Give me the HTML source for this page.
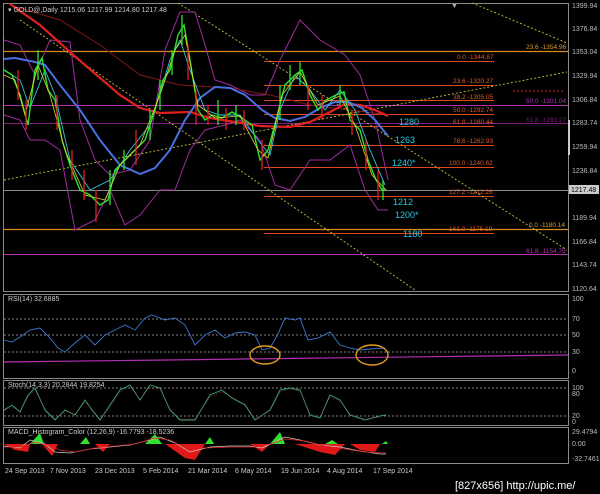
<!DOCTYPE html>
<html><head><meta charset="utf-8"><style>
html,body{margin:0;padding:0;background:#000;width:600px;height:494px;overflow:hidden}
svg{display:block}
text{font-family:"Liberation Sans",sans-serif}
</style></head><body>
<svg width="600" height="494" viewBox="0 0 600 494" xmlns="http://www.w3.org/2000/svg">
<rect width="600" height="494" fill="#000"/>
<!-- panel borders -->
<g fill="none" stroke="#8a8a8a" stroke-width="1">
<rect x="3.5" y="3.5" width="565" height="288"/>
<rect x="3.5" y="294.5" width="565" height="84"/>
<rect x="3.5" y="380.5" width="565" height="45"/>
<rect x="3.5" y="427.5" width="565" height="36"/>
</g>
<!-- right axis labels -->
<g font-size="7" fill="#bbb">
<text x="572" y="8">1399.94</text><text x="572" y="31">1376.84</text><text x="572" y="54">1353.04</text>
<text x="572" y="78">1329.94</text><text x="572" y="102">1306.84</text><text x="572" y="125">1283.74</text>
<text x="572" y="149">1259.94</text><text x="572" y="173">1236.84</text><text x="572" y="220">1189.94</text>
<text x="572" y="244">1166.84</text><text x="572" y="267">1143.74</text><text x="572" y="291">1120.64</text>
<text x="572" y="301">100</text><text x="572" y="321">70</text><text x="572" y="337">50</text>
<text x="572" y="354">30</text><text x="572" y="373">0</text>
<text x="572" y="390">100</text><text x="572" y="396">80</text><text x="572" y="418">20</text><text x="572" y="424">0</text>
<text x="572" y="434">29.4794</text><text x="572" y="446">0.00</text><text x="572" y="461">-32.7461</text>
</g>
<rect x="569" y="185" width="30" height="9" fill="#ccc"/>
<text x="571" y="192" font-size="7" fill="#000">1217.48</text>
<rect x="568" y="120" width="2" height="35" fill="#ccc"/>
<!-- full width horizontal lines -->
<line x1="4" y1="51.5" x2="568" y2="51.5" stroke="#d88a20" stroke-width="1.2"/>
<line x1="4" y1="105.5" x2="568" y2="105.5" stroke="#b030b0"/>
<line x1="4" y1="123.5" x2="568" y2="123.5" stroke="#802080"/>
<line x1="4" y1="190.5" x2="568" y2="190.5" stroke="#8a8a8a"/>
<line x1="4" y1="229.5" x2="568" y2="229.5" stroke="#d88a20" stroke-width="1.2"/>
<line x1="4" y1="254.5" x2="568" y2="254.5" stroke="#b030b0"/>
<!-- fib lines -->
<g stroke="#e04a1a" stroke-width="1">
<line x1="264" y1="61.5" x2="494" y2="61.5"/><line x1="264" y1="85.5" x2="494" y2="85.5"/>
<line x1="264" y1="100.5" x2="494" y2="100.5"/><line x1="264" y1="114.5" x2="494" y2="114.5"/>
<line x1="264" y1="126.5" x2="494" y2="126.5"/><line x1="264" y1="145.5" x2="494" y2="145.5"/>
<line x1="264" y1="167.5" x2="494" y2="167.5"/><line x1="264" y1="196.5" x2="494" y2="196.5"/>
<line x1="264" y1="233.5" x2="494" y2="233.5"/>
</g>
<g font-size="6.5" fill="#e05a2a">
<text x="457" y="59">0.0 -1344.87</text><text x="453" y="83">23.6 -1320.27</text>
<text x="453" y="99">38.2 -1305.05</text><text x="453" y="112">50.0 -1292.74</text>
<text x="453" y="124">61.8 -1280.44</text><text x="453" y="143">78.6 -1262.93</text>
<text x="449" y="165">100.0 -1240.62</text><text x="449" y="194">127.2 -1212.26</text>
<text x="449" y="231">161.0 -1175.19</text>
</g>
<text x="526" y="49" font-size="6.5" fill="#d8a030">23.6 -1354.96</text>
<text x="529" y="227" font-size="6.5" fill="#d8a030">0.0 -1180.14</text>
<text x="526" y="103" font-size="6.5" fill="#b030b0">50.0 -1301.04</text>
<text x="526" y="122" font-size="6.5" fill="#702070">61.8 -1283.27</text>
<text x="526" y="253" font-size="6.5" fill="#b030b0">61.8 -1154.75</text>
<line x1="513" y1="91" x2="563" y2="91" stroke="#e02020" stroke-dasharray="2,2"/>
<!-- dashed trendlines -->
<g stroke="#c8c040" stroke-width="0.9" stroke-dasharray="2,2" fill="none">
<line x1="178" y1="3" x2="567" y2="250"/>
<line x1="472" y1="3" x2="567" y2="43"/>
<line x1="4" y1="180" x2="567" y2="72"/>
<line x1="20" y1="20" x2="415" y2="290"/>
</g>
<!-- bollinger magenta -->
<g fill="none" stroke="#a02ca0" stroke-width="1">
<polyline points="4,40 20,45 35,75 50,40 70,42 80,120 95,160 110,175 130,170 150,140 165,50 180,12 195,12 205,45 215,80 230,85 250,95 265,95 280,60 300,20 320,40 345,55 360,75 375,120 388,180"/>
<polyline points="4,115 20,120 30,140 45,140 60,150 75,230 95,220 110,190 125,225 140,215 160,190 175,190 190,150 205,130 225,125 240,120 260,140 275,185 290,190 310,160 330,160 350,145 365,190 378,210 388,210"/>
</g>
<!-- dark red slow MA -->
<polyline fill="none" stroke="#801818" stroke-width="1" points="10,5 60,20 100,45 140,75 180,85 230,88 270,95 310,105 350,110 390,115"/>
<!-- red MA -->
<polyline fill="none" stroke="#e02020" stroke-width="2.2" points="10,4 40,25 70,52 100,78 120,95 140,108 160,113 190,112 210,118 235,122 260,126 290,127 310,122 330,112 345,104 360,105 375,110 388,116"/>
<!-- blue MA -->
<polyline fill="none" stroke="#4a6fe0" stroke-width="2" points="4,59 15,58 35,62 45,65 60,85 80,110 100,140 120,165 140,174 155,168 170,150 185,120 200,98 215,87 230,88 245,95 262,110 275,118 290,121 305,117 320,108 335,102 348,102 362,108 375,120 388,136"/>
<!-- cyan fast MA -->
<polyline fill="none" stroke="#30c8d8" stroke-width="0.9" points="4,70 20,80 30,108 45,70 55,95 70,160 90,190 110,180 130,150 150,125 170,60 180,40 190,70 205,110 220,115 240,115 258,140 270,155 280,110 295,75 310,90 325,110 340,90 355,110 370,150 385,185"/>
<!-- price line (candles approx) -->
<polyline fill="none" stroke="#30e030" stroke-width="1.4" points="4,70 12,75 20,95 28,125 35,70 42,58 48,90 55,100 62,140 70,165 80,190 90,195 100,205 108,200 115,170 125,160 135,150 145,140 155,110 163,80 170,70 178,35 184,25 190,60 198,110 205,120 212,115 222,118 232,112 242,118 252,125 260,160 268,150 276,120 285,85 295,75 302,70 310,95 318,110 326,100 336,95 344,92 350,120 360,130 368,160 376,180 382,190 386,190"/>
<polyline fill="none" stroke="#d8d830" stroke-width="0.8" points="4,75 15,80 25,115 38,65 50,95 65,150 85,195 105,200 120,165 140,145 160,95 175,50 185,35 198,105 215,118 240,116 258,150 268,158 282,95 300,72 318,105 340,96 355,125 372,175 386,190"/>
<g stroke="#e02020" stroke-width="1.3">
<line x1="18" y1="70" x2="18" y2="100"/><line x1="26" y1="100" x2="26" y2="130"/><line x1="57" y1="95" x2="57" y2="130"/>
<line x1="72" y1="150" x2="72" y2="180"/><line x1="84" y1="170" x2="84" y2="200"/><line x1="96" y1="190" x2="96" y2="222"/>
<line x1="136" y1="130" x2="136" y2="165"/><line x1="188" y1="45" x2="188" y2="80"/><line x1="196" y1="90" x2="196" y2="125"/>
<line x1="208" y1="105" x2="208" y2="125"/><line x1="226" y1="108" x2="226" y2="130"/><line x1="244" y1="110" x2="244" y2="130"/>
<line x1="262" y1="140" x2="262" y2="170"/><line x1="308" y1="85" x2="308" y2="110"/><line x1="322" y1="95" x2="322" y2="120"/>
<line x1="352" y1="110" x2="352" y2="135"/><line x1="366" y1="140" x2="366" y2="170"/><line x1="378" y1="170" x2="378" y2="200"/>
</g>
<g stroke="#30e030" stroke-width="1.3">
<line x1="38" y1="50" x2="38" y2="80"/><line x1="110" y1="170" x2="110" y2="205"/><line x1="124" y1="150" x2="124" y2="170"/>
<line x1="150" y1="110" x2="150" y2="140"/><line x1="160" y1="80" x2="160" y2="110"/><line x1="172" y1="50" x2="172" y2="75"/>
<line x1="182" y1="15" x2="182" y2="45"/><line x1="218" y1="100" x2="218" y2="125"/><line x1="236" y1="105" x2="236" y2="125"/>
<line x1="280" y1="85" x2="280" y2="120"/><line x1="290" y1="65" x2="290" y2="90"/><line x1="300" y1="62" x2="300" y2="85"/>
<line x1="340" y1="85" x2="340" y2="105"/><line x1="383" y1="180" x2="383" y2="200"/>
</g>
<!-- cyan labels -->
<g font-size="9" fill="#28c8e0">
<text x="399" y="125">1280</text><text x="395" y="143">1263</text><text x="392" y="166">1240*</text>
<text x="393" y="205">1212</text><text x="395" y="218">1200*</text><text x="403" y="237">1180</text>
</g>
<text x="8" y="12" font-size="7" fill="#ccc">▾ GOLD@,Daily  1215.06 1217.99 1214.80 1217.48</text>
<text x="451" y="8" font-size="7" fill="#aaa">▼</text>
<!-- RSI -->
<g stroke="#aaa" stroke-width="0.7" stroke-dasharray="2,2">
<line x1="4" y1="319" x2="568" y2="319"/><line x1="4" y1="335" x2="568" y2="335"/><line x1="4" y1="352" x2="568" y2="352"/>
<line x1="4" y1="388" x2="568" y2="388"/><line x1="4" y1="416" x2="568" y2="416"/>
</g>
<text x="8" y="301" font-size="7" fill="#ccc">RSI(14) 32.6885</text>
<line x1="4" y1="362" x2="568" y2="355" stroke="#b030b0" stroke-width="1.2"/>
<polyline fill="none" stroke="#3a78d0" stroke-width="0.9" points="4,340 12,342 20,337 30,330 40,328 50,338 58,348 65,352 75,343 85,335 95,345 105,335 115,330 125,325 135,330 145,318 152,315 165,320 175,318 185,325 195,345 205,335 215,330 225,338 235,333 245,332 255,335 262,350 270,348 277,336 285,318 295,320 300,318 308,340 318,338 330,332 340,345 350,348 360,350 370,349 385,348"/>
<ellipse cx="265" cy="355" rx="15" ry="9" fill="none" stroke="#e09a20" stroke-width="1.4"/>
<ellipse cx="372" cy="355" rx="16" ry="10" fill="none" stroke="#e09a20" stroke-width="1.4"/>
<!-- Stoch -->
<text x="8" y="387" font-size="7" fill="#ccc">Stoch(14,3,3) 20.2844 19.8254</text>
<polyline fill="none" stroke="#3aa878" stroke-width="0.9" points="4,410 12,405 20,412 28,395 35,388 45,410 55,420 65,410 75,415 85,400 92,410 100,420 110,405 120,390 130,385 140,400 150,385 160,388 170,410 180,420 195,420 210,395 222,390 232,398 245,405 255,420 270,410 280,390 290,388 300,390 310,415 320,418 330,395 340,400 350,415 365,420 380,416 386,415"/>
<polyline fill="none" stroke="#c04040" stroke-width="0.5" stroke-dasharray="1,1" points="4,411 12,407 20,411 28,397 35,390 45,409 55,419 65,411 75,414 85,402 92,409 100,419 110,407 120,392 130,387 140,399 150,387 160,389 170,409 180,419 195,419 210,397 222,392 232,397 245,404 255,419 270,411 280,392 290,389 300,391 310,414 320,417 330,397 340,401 350,414 365,419 380,417"/>
<!-- MACD -->
<text x="8" y="434" font-size="7" fill="#ccc">MACD_Histogram_Color (12,26,9) -16.7793 -18.5236</text>
<g fill="#e01818">
<polygon points="4,444 30,444 28,452 15,450"/><polygon points="42,444 58,444 52,456"/><polygon points="95,444 110,444 103,452"/>
<polygon points="165,444 205,444 195,460 185,458"/><polygon points="250,444 270,444 262,452"/><polygon points="295,444 345,444 335,455 320,452"/>
<polygon points="350,444 380,444 375,452 360,450"/>
</g>
<g fill="#30e030">
<polygon points="30,444 40,433 44,444"/><polygon points="80,444 86,437 90,444"/><polygon points="145,444 155,434 162,444"/>
<polygon points="205,444 210,437 214,444"/><polygon points="270,444 280,432 285,444"/><polygon points="325,444 332,440 338,444"/>
<polygon points="382,444 386,441 388,444"/>
</g>
<polyline fill="none" stroke="#ccc" stroke-width="0.7" points="4,446 20,448 30,440 45,444 55,452 70,453 90,449 110,447 130,445 150,440 160,437 175,443 190,452 210,447 230,446 250,446 262,448 275,442 285,437 300,440 320,445 340,447 360,451 380,454 386,454"/>
<polyline fill="none" stroke="#e02020" stroke-width="0.7" points="4,447 20,447 35,442 50,446 60,450 75,452 95,448 115,446 135,444 155,438 170,440 185,448 205,448 230,447 255,447 270,444 285,439 305,441 325,446 345,449 365,452 386,453"/>
<!-- dates -->
<g font-size="7" fill="#ccc">
<text x="5" y="473">24 Sep 2013</text><text x="50" y="473">7 Nov 2013</text><text x="95" y="473">23 Dec 2013</text>
<text x="143" y="473">5 Feb 2014</text><text x="188" y="473">21 Mar 2014</text><text x="235" y="473">6 May 2014</text>
<text x="281" y="473">19 Jun 2014</text><text x="327" y="473">4 Aug 2014</text><text x="373" y="473">17 Sep 2014</text>
</g>
<text x="455" y="489" font-size="11" fill="#fff" font-family="Liberation Mono,monospace">[827x656] http://upic.me/</text>
</svg>
</body></html>
